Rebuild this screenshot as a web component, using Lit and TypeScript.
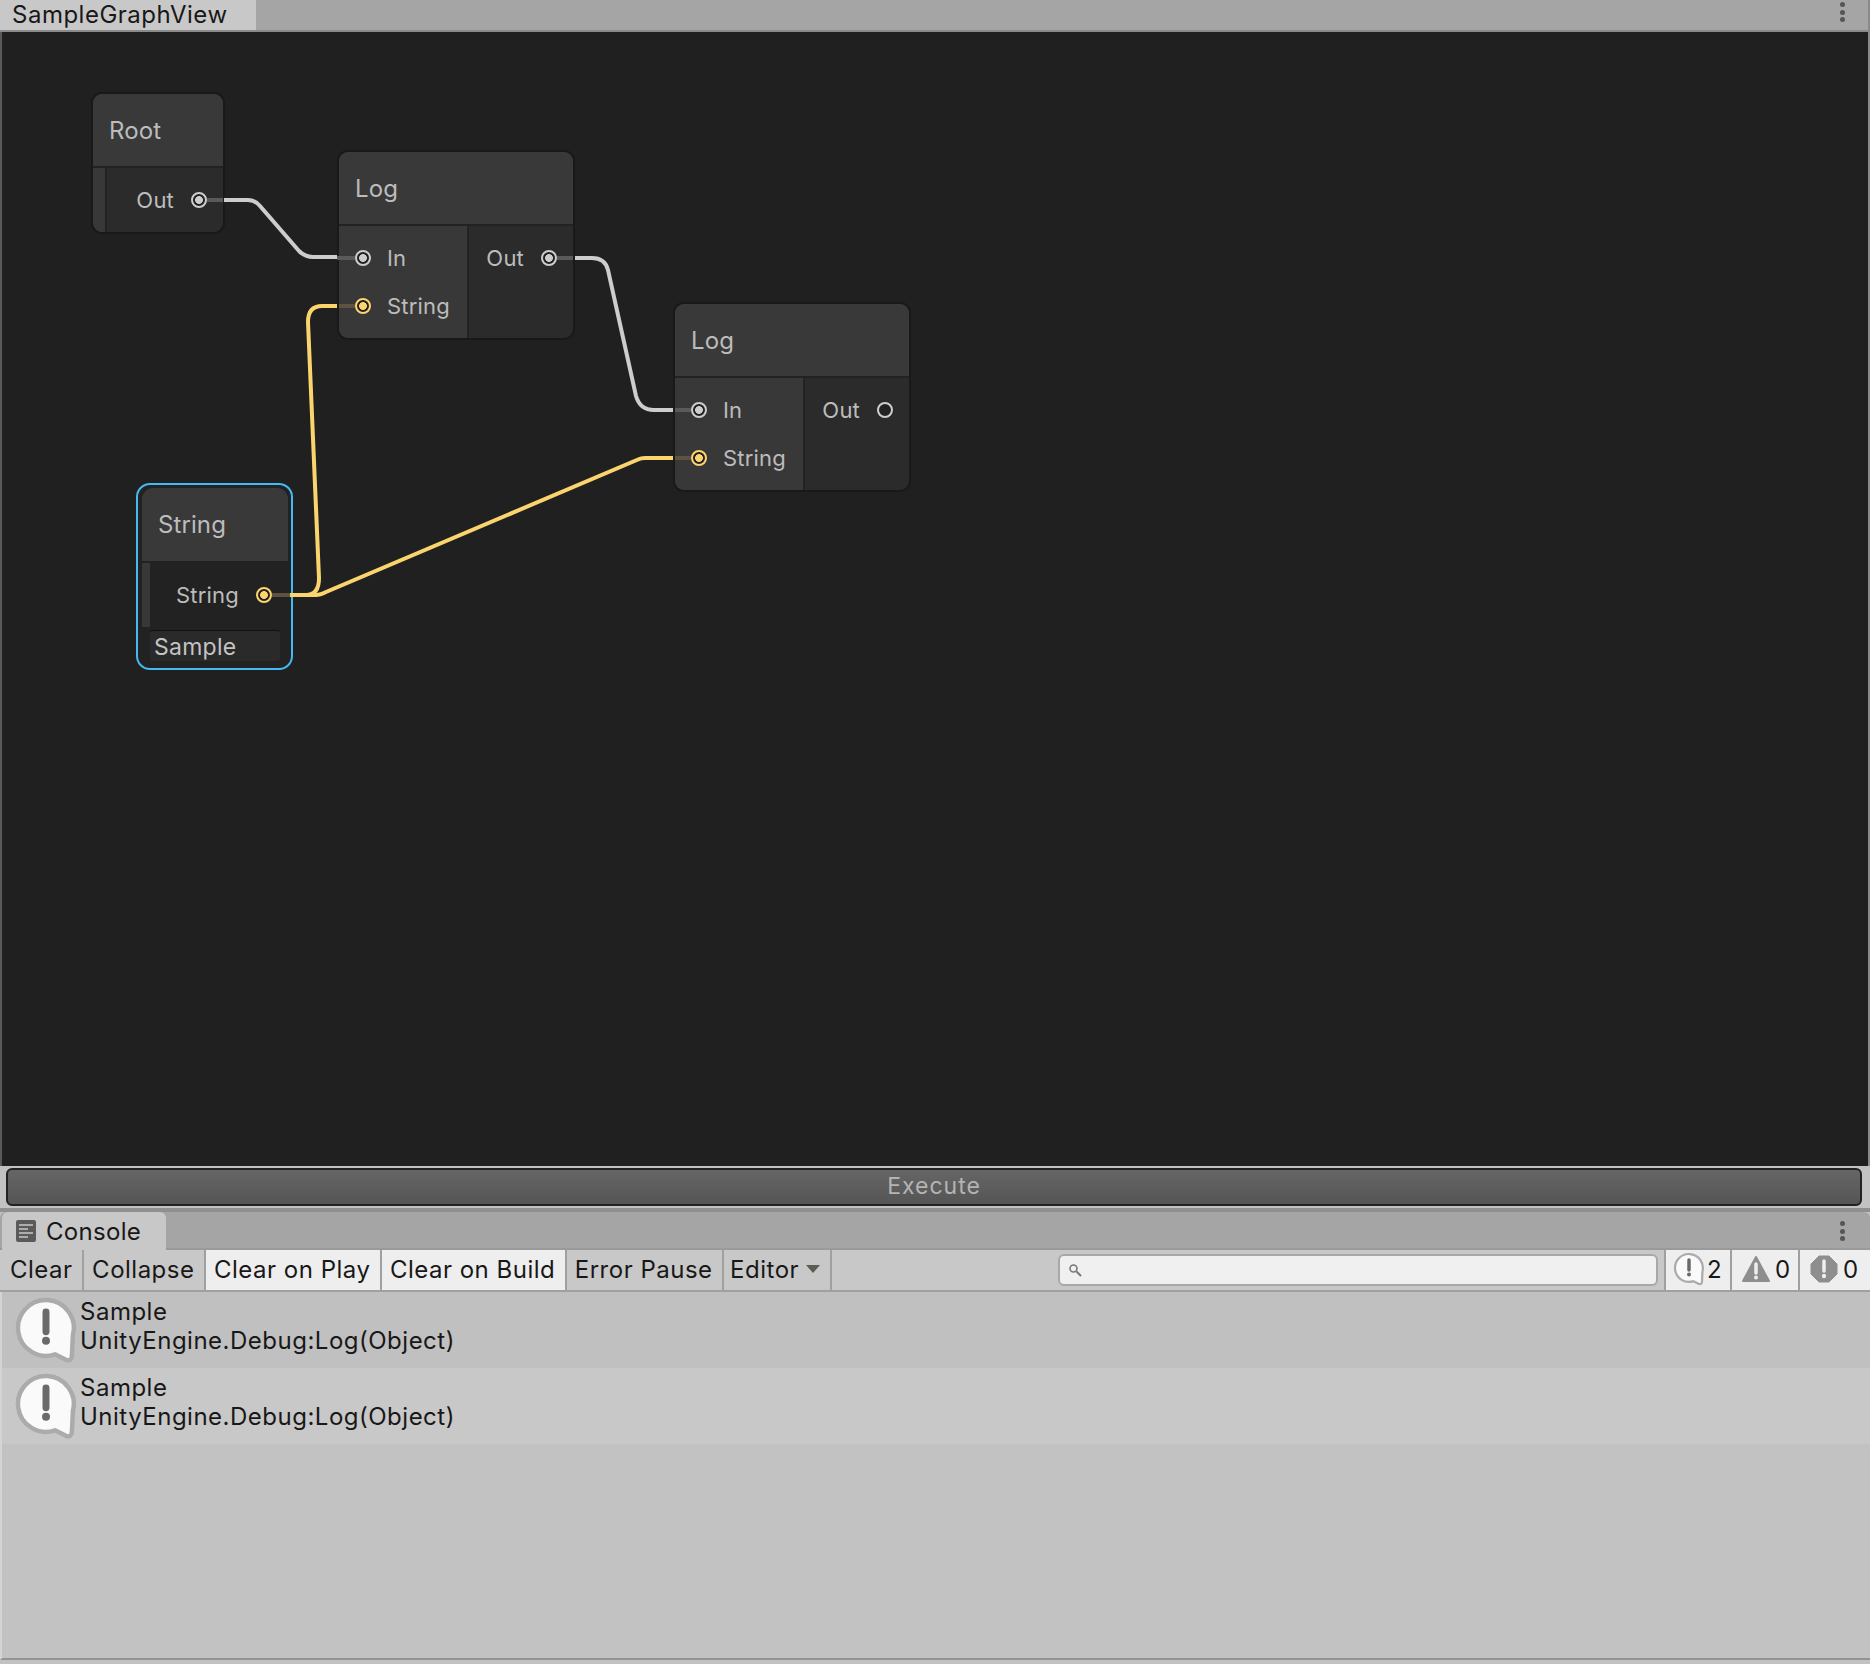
import { LitElement, css, html, svg } from "lit";
import { customElement } from "lit/decorators.js";

const GRAPH_TOP = 32;

type Port = { label: string; color?: "white" | "yellow"; empty?: boolean };
type GraphNode = {
  title: string;
  x: number;
  y: number;
  w: number;
  inputs: Port[];
  outputs: Port[];
};

const nodes: GraphNode[] = [
  { title: "Root", x: 91, y: 92, w: 134, inputs: [], outputs: [{ label: "Out" }] },
  {
    title: "Log",
    x: 337,
    y: 150,
    w: 238,
    inputs: [{ label: "In" }, { label: "String", color: "yellow" }],
    outputs: [{ label: "Out" }],
  },
  {
    title: "Log",
    x: 673,
    y: 302,
    w: 238,
    inputs: [{ label: "In" }, { label: "String", color: "yellow" }],
    outputs: [{ label: "Out", empty: true }],
  },
];

const bubble = (size: number) => html`
  <svg class="bubble" width=${size} height=${size * 1.09} viewBox="0 0 64 70">
    <path
      d="M41 58.500A28 28 0 1 1 59 39L58 60Q57.500 66 52 64Z"
      fill="#fafafa"
      stroke="#ababab"
      stroke-width="4.500"
      stroke-linejoin="round"
    ></path>
    <path d="M32 16V36" stroke="#6a6a6a" stroke-width="7" stroke-linecap="round"></path>
    <circle cx="32" cy="45" r="4" fill="#6a6a6a"></circle>
  </svg>
`;

const dots = html`<div class="dots"><i></i><i></i><i></i></div>`;

@customElement("app-root")
export class AppRoot extends LitElement {
  renderPort(p: Port) {
    return html`<div class="port ${p.color === "yellow" ? "yellow" : ""} ${p.empty ? "empty" : ""}">
      <span class="dot"></span>
      <span class="label">${p.label}</span>
    </div>`;
  }

  renderNode(n: GraphNode) {
    return html`<div class="node" style="left:${n.x}px;top:${n.y - GRAPH_TOP}px;width:${n.w}px">
      <div class="node-title">${n.title}</div>
      <div class="node-body">
        <div class="col in ${n.inputs.length ? "" : "strip"}">${n.inputs.map((p) => this.renderPort(p))}</div>
        <div class="col out">${n.outputs.map((p) => this.renderPort(p))}</div>
      </div>
    </div>`;
  }

  renderWires() {
    const white = "#cdcdcd";
    const yellow = "#fbd46e";
    return svg`
      <path d="M207 200H223M337 258H355M557 258H573M675 410H691" stroke="#5a5a5a" stroke-width="4"></path>
      <path d="M339 306H355M675 458H691M272 595H290" stroke="#5c543e" stroke-width="4"></path>
      <g fill="none" stroke-width="4">
        <path d="M224 200H248Q255 200 260 206L299 251Q305 257 313 257H337" stroke=${white}></path>
        <path d="M575 258H592Q605 258 608 270L636 396Q640 410 654 410H673" stroke=${white}></path>
        <path d="M290 595H306Q319 595 319 578L308 322Q308 306 322 306H337" stroke=${yellow}></path>
        <path d="M290 595H316Q320 595 326 592L638 459.500Q641 458 645 458H673" stroke=${yellow}></path>
      </g>
    `;
  }

  renderEntry(alt: boolean) {
    return html`<div class="entry ${alt ? "alt" : ""}">
      ${bubble(64)}
      <div class="entry-text">
        <div>Sample</div>
        <div>UnityEngine.Debug:Log(Object)</div>
      </div>
    </div>`;
  }

  render() {
    return html`
      <div class="tabbar top">
        <div class="tab first">SampleGraphView</div>
        ${dots}
      </div>
      <div class="graph">
        ${nodes.map((n) => this.renderNode(n))}
        <div class="selected" style="left:136px;top:${483 - GRAPH_TOP}px">
          <div class="node inner">
            <div class="node-title">String</div>
            <div class="node-body">
              <div class="col in strip small"></div>
              <div class="col out">${this.renderPort({ label: "String", color: "yellow" })}</div>
            </div>
            <div class="field-row"><div class="field">Sample</div></div>
          </div>
        </div>
        <svg class="wires" viewBox="0 ${GRAPH_TOP} 1866 1134" width="1866" height="1134">${this.renderWires()}</svg>
      </div>
      <div class="execute-wrap"><button class="execute">Execute</button></div>
      <div class="divider"></div>
      <div class="tabbar console">
        <div class="tab console-tab">
          <svg width="20" height="22" viewBox="0 0 20 22">
            <rect width="20" height="22" rx="2" fill="#5a5a5a"></rect>
            <path d="M3 5H17M3 9H12M3 13H17M3 17H12" stroke="#c8c8c8" stroke-width="1.500"></path>
          </svg>
          Console
        </div>
        ${dots}
      </div>
      <div class="toolbar">
        <div class="btn">Clear</div>
        <div class="btn">Collapse</div>
        <div class="btn on">Clear on Play</div>
        <div class="btn on">Clear on Build</div>
        <div class="btn">Error Pause</div>
        <div class="btn editor">Editor<span class="caret"></span></div>
        <div class="search">
          <svg width="14" height="14" viewBox="0 0 14 14">
            <circle cx="5.500" cy="5.500" r="3.500" fill="none" stroke="#777" stroke-width="1.600"></circle>
            <path d="M8.500 8.500L13 13" stroke="#777" stroke-width="2"></path>
          </svg>
        </div>
        <div class="btn on count first">${bubble(32)}<span>2</span></div>
        <div class="btn on count">
          <svg width="28" height="28" viewBox="0 0 28 28">
            <path d="M14 2L27 26H1Z" fill="#8e8e8e" stroke="#8e8e8e" stroke-width="2" stroke-linejoin="round"></path>
            <path d="M14 9V18" stroke="#eee" stroke-width="3.500" stroke-linecap="round"></path>
            <circle cx="14" cy="22.500" r="2" fill="#eee"></circle>
          </svg>
          <span>0</span>
        </div>
        <div class="btn on count last">
          <svg width="28" height="28" viewBox="0 0 28 28">
            <path d="M9 1H19L27 9V19L19 27H9L1 19V9Z" fill="#8e8e8e" stroke="#8e8e8e" stroke-linejoin="round"></path>
            <path d="M14 6V16" stroke="#eee" stroke-width="3.500" stroke-linecap="round"></path>
            <circle cx="14" cy="21" r="2.200" fill="#eee"></circle>
          </svg>
          <span>0</span>
        </div>
      </div>
      <div class="list">${this.renderEntry(false)}${this.renderEntry(true)}</div>
      <div class="footer"></div>
    `;
  }

  static styles = css`
    :host {
      display: block;
      width: 1870px;
      height: 1664px;
      overflow: hidden;
      font-family: Inter, "Liberation Sans", sans-serif;
      background: #c2c2c2;
      color: #181818;
    }

    .tabbar {
      display: flex;
      justify-content: space-between;
      background: #a5a5a5;
      font-size: 24px;
      letter-spacing: 0.5px;
    }

    .tabbar.top {
      height: 30px;
      border-bottom: 2px solid #8a8a8a;
      border-right: 2px solid #8a8a8a;
    }

    .tabbar.console {
      height: 38px;
      border-radius: 6px 6px 0 0;
      box-shadow: inset 0 -2px 0 #9a9a9a;
    }

    .tab {
      display: flex;
      align-items: center;
      background: #c8c8c8;
    }

    .tab.first {
      width: 244px;
      padding: 0 0 2px 12px;
    }

    .tab.console-tab {
      width: 150px;
      margin-left: 2px;
      padding-left: 14px;
      gap: 10px;
      letter-spacing: 0.3px;
      border-radius: 6px 6px 0 0;
    }

    .dots {
      display: flex;
      flex-direction: column;
      gap: 2.500px;
      margin: 2px 23px 0 0;
    }

    .tabbar.console .dots {
      margin: 9px 25px 0 0;
    }

    .dots i {
      width: 5px;
      height: 5px;
      border-radius: 50%;
      background: #555;
    }

    .graph {
      position: relative;
      height: 1134px;
      background: #202020;
      border-left: 2px solid #5a5a5a;
      border-right: 2px solid #8a8a8a;
      font-size: 22px;
      color: #bcbcbc;
      letter-spacing: 0.2px;
    }

    .wires {
      position: absolute;
      left: -2px;
      top: 0;
      pointer-events: none;
    }

    .node {
      position: absolute;
      box-sizing: border-box;
      margin-left: -2px;
      border: 2px solid #191919;
      border-radius: 11px;
      overflow: hidden;
      background: #2b2b2b;
    }

    .node-title {
      height: 74px;
      box-sizing: border-box;
      padding-left: 16px;
      display: flex;
      align-items: center;
      font-size: 24px;
      letter-spacing: 0.1px;
      background: #393939;
      border-bottom: 2px solid #222;
    }

    .node-body {
      display: flex;
    }

    .col {
      padding: 8px 0;
    }

    .col.in {
      background: #383838;
      border-right: 2px solid #222;
      padding-left: 16px;
      padding-right: 17px;
    }

    .col.in.strip {
      width: 14px;
      padding: 0;
      box-sizing: border-box;
    }

    .col.in.strip.small {
      width: 10px;
    }

    .col.out {
      flex: 1;
    }

    .col.out .port {
      flex-direction: row-reverse;
      gap: 17px;
      padding-right: 16px;
    }

    .port {
      display: flex;
      align-items: center;
      gap: 16px;
      height: 48px;
      --c: #cdcdcd;
    }

    .port.yellow {
      --c: #fbd46e;
    }

    .dot {
      width: 16px;
      height: 16px;
      box-sizing: border-box;
      border: 2px solid var(--c);
      border-radius: 50%;
      background: radial-gradient(circle, var(--c) 0 3.600px, #222 4.200px);
      flex: none;
    }

    .port.empty .dot {
      background: #222;
    }

    .selected {
      position: absolute;
      margin-left: -2px;
      width: 157px;
      height: 187px;
      box-sizing: border-box;
      border: 2px solid #44b9f2;
      border-radius: 14px;
      padding: 3px 3px 1px 4px;
      background: #222;
    }

    .node.inner {
      position: static;
      margin: 0;
      width: 146px;
      height: 179px;
      border: none;
      background: #222;
    }

    .node.inner .node-title {
      height: 75px;
    }

    .field-row {
      padding: 3px 8px 0 8px;
    }

    .field {
      height: 31px;
      box-sizing: border-box;
      padding-left: 4px;
      background: #2a2a2a;
      border-top: 1px solid #111;
      border-radius: 3px;
      font-size: 23px;
      letter-spacing: 0.25px;
      line-height: 33px;
      color: #c4c4c4;
    }

    .execute-wrap {
      box-sizing: border-box;
      height: 42px;
      padding: 2px 8px 2px 6px;
      background: #c2c2c2;
    }

    .execute {
      display: block;
      width: 100%;
      height: 38px;
      box-sizing: border-box;
      padding: 0 0 2px;
      border: 2px solid #222;
      border-radius: 6px;
      background: linear-gradient(#666, #555);
      color: #b4b4b4;
      font: 23px Inter, sans-serif;
      letter-spacing: 1px;
    }

    .divider {
      height: 4px;
      background: #8f8f8f;
    }

    .toolbar {
      display: flex;
      height: 42px;
      box-sizing: border-box;
      background: #c8c8c8;
      border-bottom: 2px solid #a0a0a0;
      font-size: 24px;
      letter-spacing: 0.5px;
    }

    .btn {
      display: flex;
      align-items: center;
      padding: 0 9.500px 2px 8px;
      border-right: 2px solid #a0a0a0;
      white-space: nowrap;
    }

    .btn:first-child {
      padding-left: 10px;
    }

    .btn.editor {
      padding-left: 6px;
    }

    .btn.on {
      background: #eeeeee;
    }

    .caret {
      width: 0;
      height: 0;
      margin-left: 7px;
      border-left: 7px solid transparent;
      border-right: 7px solid transparent;
      border-top: 8px solid #5c5c55;
    }

    .search {
      display: flex;
      align-items: center;
      box-sizing: border-box;
      width: 600px;
      height: 32px;
      margin: 4px 6px 0 auto;
      padding-left: 8px;
      background: #f0f0f0;
      border: 2px solid #a8a8a8;
      border-radius: 6px;
    }

    .count {
      box-sizing: border-box;
      width: 68px;
      padding: 0 0 2px 10px;
      gap: 5px;
      justify-content: flex-start;
    }

    .count.first {
      padding-left: 7px;
      gap: 2px;
      border-left: 2px solid #a0a0a0;
    }

    .count.last {
      width: 70px;
      border-right: 0;
    }

    .bubble {
      flex: none;
    }

    .list {
      border-left: 2px solid #d4d4d4;
    }

    .entry {
      display: flex;
      height: 76px;
      box-sizing: border-box;
      padding: 4px 0 0 12px;
      gap: 2px;
      background: #c0c0c0;
    }

    .entry.alt {
      background: #c8c8c8;
    }

    .entry-text {
      font-size: 24px;
      line-height: 29px;
      letter-spacing: 0.5px;
      color: #181818;
      margin-top: 1px;
    }

    .footer {
      height: 216px;
      box-sizing: border-box;
      border-left: 2px solid #d4d4d4;
      border-bottom: 2px solid #949494;
    }
  `;
}
